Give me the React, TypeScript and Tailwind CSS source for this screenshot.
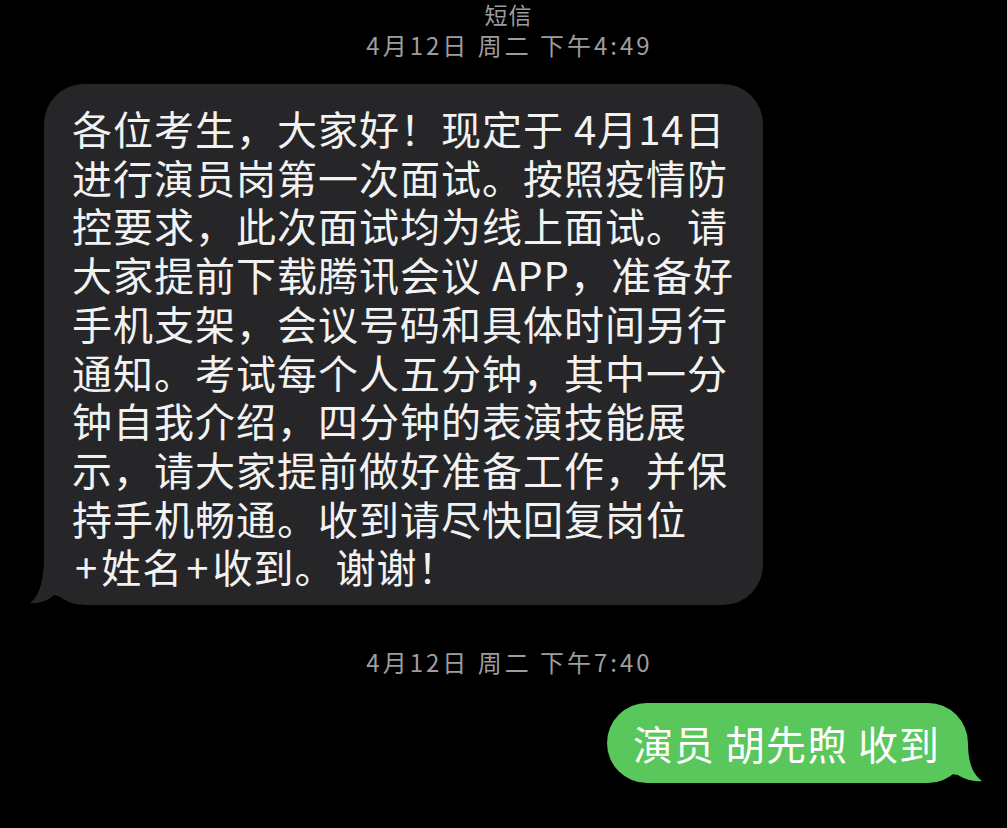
import React from 'react';

const lines = [
  '各位考生，大家好！现定于 4月14日',
  '进行演员岗第一次面试。按照疫情防',
  '控要求，此次面试均为线上面试。请',
  '大家提前下载腾讯会议 APP，准备好',
  '手机支架，会议号码和具体时间另行',
  '通知。考试每个人五分钟，其中一分',
  '钟自我介绍，四分钟的表演技能展',
  '示，请大家提前做好准备工作，并保',
  '持手机畅通。收到请尽快回复岗位',
];

const font = { fontFamily: '"Noto Sans CJK SC", "Noto Sans", sans-serif' };

function Stamp({ text }: { text: string }) {
  return (
    <div className="text-center text-[24px] leading-[28px] tracking-[3px] text-[#9d9d9f] pl-[12px]">
      {text}
    </div>
  );
}

export default function App() {
  return (
    <div className="w-[1007px] h-[828px] bg-black overflow-hidden flex flex-col" style={font}>
      <div className="pt-[1px] text-center text-[23px] leading-[27px] tracking-[1px] text-[#9d9d9f] pl-[10px]">短信</div>
      <div className="mt-[3px]">
        <Stamp text="4月12日 周二 下午4:49" />
      </div>

      <div className="relative ml-[44px] mt-[25px] w-[719px] rounded-[40px] bg-[#262628] pl-[28px] pt-[20px] pb-[14px]">
        <svg className="absolute left-[-16px] bottom-0" width="40" height="50" viewBox="0 0 40 50">
          <path d="M16 0 C16 30 10 42 2 48 C10 49 20 46 26 40 L40 44 L40 0 Z" fill="#262628" />
        </svg>
        <div className="relative text-[40px] leading-[48.7px] tracking-[1px] text-[#f2f2f2]">
          {lines.map((l) => (
            <div key={l} className="whitespace-nowrap">{l}</div>
          ))}
          <div className="whitespace-nowrap">
            <span className="mx-[3px]">+</span>姓名<span className="mx-[3px]">+</span>收到。谢谢！
          </div>
        </div>
      </div>

      <div className="mt-[43px]">
        <Stamp text="4月12日 周二 下午7:40" />
      </div>

      <div className="self-end mr-[39px] mt-[27px] relative rounded-[40px] bg-[#59c75b] pl-[26px] pr-[28px] py-[16px]">
        <svg className="absolute right-[-16px] bottom-0" width="40" height="50" viewBox="0 0 40 50">
          <path d="M24 10 C24 32 30 42 38 48 C30 49 20 46 14 42 L0 40 L0 10 Z" fill="#59c75b" />
        </svg>
        <div className="relative text-[40px] leading-[48px] tracking-[1px] text-white whitespace-nowrap">
          演员 胡先煦 收到
        </div>
      </div>
    </div>
  );
}
